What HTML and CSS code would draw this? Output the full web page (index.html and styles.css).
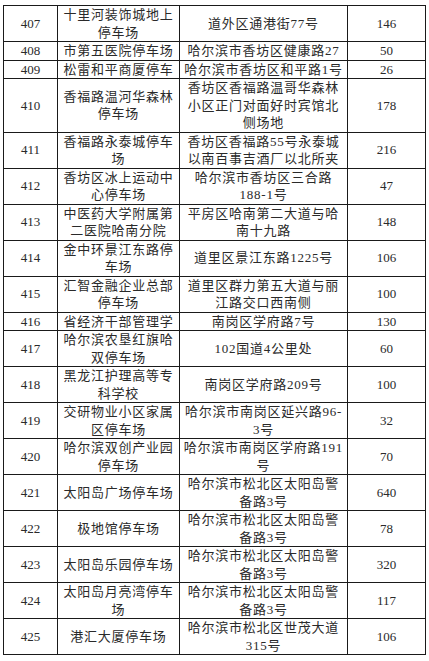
FILE: index.html
```html
<!DOCTYPE html>
<html lang="zh-CN">
<head>
<meta charset="utf-8">
<link rel="stylesheet" href="styles.css">
</head>
<body>
<table class="grid">
<colgroup><col class="c1"><col class="c2"><col class="c3"><col class="c4"></colgroup>
<tbody>
<tr><td class="num">407</td><td class="txt">十里河装饰城地上<br>停车场</td><td class="txt">道外区通港街77号</td><td class="num">146</td></tr>
<tr><td class="num">408</td><td class="txt">市第五医院停车场</td><td class="txt">哈尔滨市香坊区健康路27</td><td class="num">50</td></tr>
<tr><td class="num">409</td><td class="txt">松雷和平商厦停车</td><td class="txt">哈尔滨市香坊区和平路1号</td><td class="num">26</td></tr>
<tr><td class="num">410</td><td class="txt">香福路温河华森林<br>停车场</td><td class="txt">香坊区香福路温哥华森林<br>小区正门对面好时宾馆北<br>侧场地</td><td class="num">178</td></tr>
<tr><td class="num">411</td><td class="txt">香福路永泰城停车<br>场</td><td class="txt">香坊区香福路55号永泰城<br>以南百事吉酒厂以北所夹</td><td class="num">216</td></tr>
<tr><td class="num">412</td><td class="txt">香坊区冰上运动中<br>心停车场</td><td class="txt">哈尔滨市香坊区三合路<br>188-1号</td><td class="num">47</td></tr>
<tr><td class="num">413</td><td class="txt">中医药大学附属第<br>二医院哈南分院</td><td class="txt">平房区哈南第二大道与哈<br>南十九路</td><td class="num">148</td></tr>
<tr><td class="num">414</td><td class="txt">金中环景江东路停<br>车场</td><td class="txt">道里区景江东路1225号</td><td class="num">106</td></tr>
<tr><td class="num">415</td><td class="txt">汇智金融企业总部<br>停车场</td><td class="txt">道里区群力第五大道与丽<br>江路交口西南侧</td><td class="num">100</td></tr>
<tr><td class="num">416</td><td class="txt">省经济干部管理学</td><td class="txt">南岗区学府路7号</td><td class="num">130</td></tr>
<tr><td class="num">417</td><td class="txt">哈尔滨农垦红旗哈<br>双停车场</td><td class="txt">102国道4公里处</td><td class="num">60</td></tr>
<tr><td class="num">418</td><td class="txt">黑龙江护理高等专<br>科学校</td><td class="txt">南岗区学府路209号</td><td class="num">100</td></tr>
<tr><td class="num">419</td><td class="txt">交研物业小区家属<br>区停车场</td><td class="txt">哈尔滨市南岗区延兴路96-<br>3号</td><td class="num">32</td></tr>
<tr><td class="num">420</td><td class="txt">哈尔滨双创产业园<br>停车场</td><td class="txt">哈尔滨市南岗区学府路191<br>号</td><td class="num">70</td></tr>
<tr><td class="num">421</td><td class="txt">太阳岛广场停车场</td><td class="txt">哈尔滨市松北区太阳岛警<br>备路3号</td><td class="num">640</td></tr>
<tr><td class="num">422</td><td class="txt">极地馆停车场</td><td class="txt">哈尔滨市松北区太阳岛警<br>备路3号</td><td class="num">78</td></tr>
<tr><td class="num">423</td><td class="txt">太阳岛乐园停车场</td><td class="txt">哈尔滨市松北区太阳岛警<br>备路3号</td><td class="num">320</td></tr>
<tr><td class="num">424</td><td class="txt">太阳岛月亮湾停车<br>场</td><td class="txt">哈尔滨市松北区太阳岛警<br>备路3号</td><td class="num">117</td></tr>
<tr><td class="num">425</td><td class="txt">港汇大厦停车场</td><td class="txt">哈尔滨市松北区世茂大道<br>315号</td><td class="num">106</td></tr>
</tbody>
</table>
</body>
</html>
```

FILE: styles.css
```css
html, body {
  margin: 0;
  padding: 0;
  background: #ffffff;
}
body {
  padding: 5px 0 0 3px;
  font-family: "Liberation Serif", "Noto Sans CJK SC", serif;
  color: #2a2a2a;
}
.grid {
  border-collapse: collapse;
  table-layout: fixed;
  width: 422px;
  border: 1px solid #1a1a1a;
}
.c1 { width: 54px; }
.c2 { width: 122px; }
.c3 { width: 168px; }
.c4 { width: 78px; }
.grid td {
  border: 1px solid #1a1a1a;
  padding: 0;
  text-align: center;
  vertical-align: middle;
  line-height: 17.5px;
  white-space: nowrap;
  overflow: hidden;
}
.num {
  font-size: 13px;
}
.txt {
  font-size: 13px;
  letter-spacing: 0.75px;
}
```
